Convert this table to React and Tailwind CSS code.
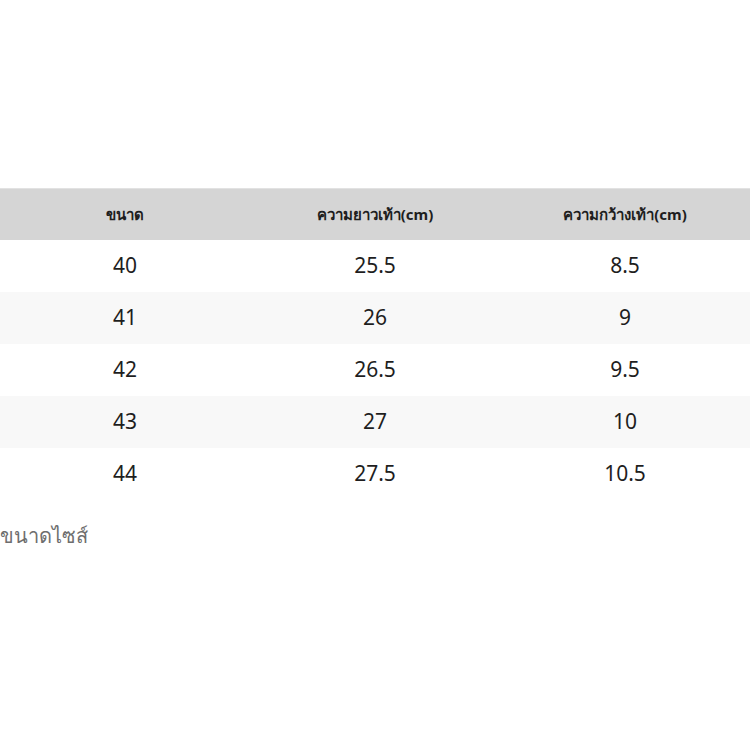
import React from "react";

const rows = [
  ["40", "25.5", "8.5"],
  ["41", "26", "9"],
  ["42", "26.5", "9.5"],
  ["43", "27", "10"],
  ["44", "27.5", "10.5"],
];

export default function App() {
  return (
    <div
      className="w-[750px] h-[750px] bg-white overflow-hidden"
      style={{ fontFamily: '"Noto Sans", "Open Sans", sans-serif' }}
    >
      <div className="h-[188px]" />

      {/* Size table */}
      <div className="grid grid-cols-3 h-[52px] bg-[#d5d5d5] border-t border-[#e2e2e2] items-center text-center text-[15px] font-bold text-[#1e1e1e]">
        <div>ขนาด</div>
        <div>ความยาวเท้า(cm)</div>
        <div>ความกว้างเท้า(cm)</div>
      </div>
      {rows.map((r, i) => (
        <div
          key={i}
          className={
            "grid grid-cols-3 h-[52px] items-center text-center text-[21px] text-[#1e1e1e] " +
            (i % 2 === 1 ? "bg-[#f8f8f8]" : "bg-white")
          }
        >
          <div>{r[0]}</div>
          <div>{r[1]}</div>
          <div>{r[2]}</div>
        </div>
      ))}

      {/* Caption */}
      <div className="mt-[21px] text-[20px] text-[#6e6e6e] leading-[30px]">ขนาดไซส์</div>
    </div>
  );
}
